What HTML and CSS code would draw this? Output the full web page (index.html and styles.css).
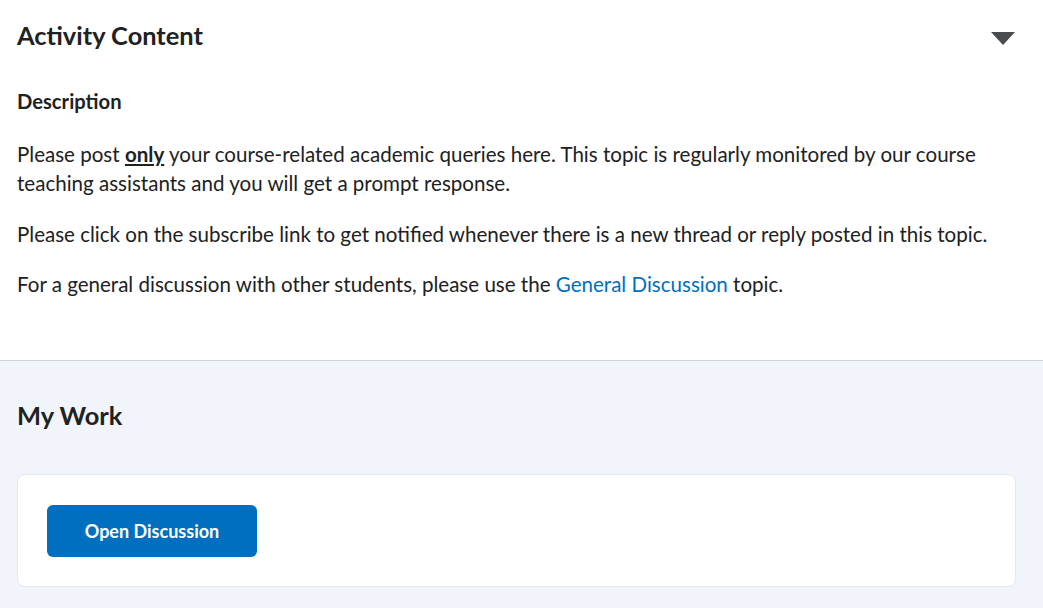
FILE: index.html
```html
<!DOCTYPE html>
<html lang="en">
<head>
<meta charset="utf-8">
<title>Activity Content</title>
<link rel="stylesheet" href="styles.css">
</head>
<body>
<section class="activity">
  <div class="activity-header">
    <h2 class="heading">Activity Content</h2>
    <svg class="caret" width="24" height="13" viewBox="0 0 24 13" aria-hidden="true"><polygon points="0,0 24,0 12,13" fill="#494c4e"/></svg>
  </div>
  <h3 class="subheading">Description</h3>
  <p class="para">Please post <strong class="emph">only</strong> your course-related academic queries here. This topic is regularly monitored by our course teaching assistants and you will get a prompt response.</p>
  <p class="para">Please click on the subscribe link to get notified whenever there is a new thread or reply posted in this topic.</p>
  <p class="para">For a general discussion with other students, please use the <a class="link" href="#">General Discussion</a> topic.</p>
</section>
<section class="mywork">
  <h2 class="heading mywork-title">My Work</h2>
  <div class="card">
    <button class="btn" type="button">Open Discussion</button>
  </div>
</section>
</body>
</html>
```

FILE: styles.css
```css
* { box-sizing: border-box; }
html, body { margin: 0; padding: 0; }
body {
  font-family: Lato, "Noto Sans", sans-serif;
  color: #202122;
  background: #ffffff;
  width: 1043px;
  height: 608px;
  overflow: hidden;
}
.activity {
  padding: 19px 17px 0 17px;
  height: 361px;
  border-bottom: 1px solid #cdd5dc;
}
.activity-header {
  display: flex;
  justify-content: space-between;
  align-items: flex-start;
  height: 32px;
}
.heading {
  margin: 0;
  font-size: 25.4px;
  font-weight: 700;
  line-height: 32px;
  letter-spacing: 0;
}
.caret {
  margin-top: 13px;
  margin-right: 11px;
  display: block;
}
.subheading {
  margin: 36px 0 0 0;
  font-size: 20.2px;
  font-weight: 700;
  line-height: 28px;
}
.para {
  margin: 25px 0 0 0;
  font-size: 20.55px;
  line-height: 29px;
}
.para + .para { margin-top: 21.5px; }
.emph {
  font-weight: 700;
  text-decoration: underline;
}
.link {
  color: #006fbf;
  text-decoration: none;
}
.mywork {
  background: #f1f5fb;
  padding: 37px 27px 0 17px;
  height: 247px;
}
.mywork-title {
  line-height: 34px;
}
.card {
  margin-top: 42px;
  background: #ffffff;
  border: 1px solid #e3e9f1;
  border-radius: 8px;
  padding: 30px 29px 29px 29px;
}
.btn {
  display: block;
  width: 210px;
  height: 52px;
  background: #006fbf;
  color: #ffffff;
  border: none;
  border-radius: 6px;
  font-family: Lato, "Noto Sans", sans-serif;
  font-size: 18px;
  font-weight: 700;
  cursor: pointer;
}
```
